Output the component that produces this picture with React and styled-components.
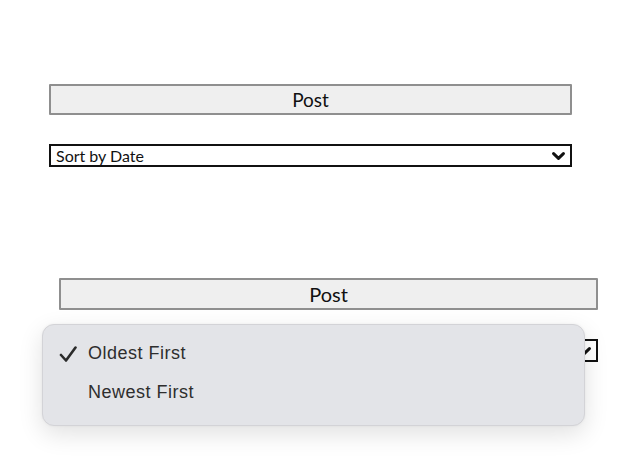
import React from "react";
import styled, { createGlobalStyle } from "styled-components";

const Global = createGlobalStyle`
  html, body { margin: 0; padding: 0; background: #ffffff; }
  body { font-family: "Lato", "Liberation Sans", sans-serif; }
  * { box-sizing: border-box; }
`;

const Page = styled.div`
  width: 637px;
  height: 473px;
  padding-top: 84px;
  display: flex;
  flex-direction: column;
  overflow: hidden;
`;

const Section = styled.div`
  position: relative;
  margin-left: ${(p) => p.$left}px;
  width: ${(p) => p.$width}px;
  margin-top: ${(p) => p.$top || 0}px;
  display: flex;
  flex-direction: column;
  gap: ${(p) => p.$gap}px;
`;

const PostButton = styled.button`
  height: ${(p) => p.$h}px;
  width: 100%;
  background: #efefef;
  border: 2px solid #8f8f8f;
  border-radius: 1px;
  font-family: "Lato", "Liberation Sans", sans-serif;
  font-size: ${(p) => p.$fs}px;
  color: #111;
  padding: 0;
  display: flex;
  align-items: center;
  justify-content: center;
`;

const Select = styled.div`
  height: 23px;
  width: 100%;
  border: 2px solid #111;
  background: #fff;
  display: flex;
  align-items: center;
  justify-content: space-between;
  padding: 0 5px 0 5px;
  font-family: "Lato", "Liberation Sans", sans-serif;
  font-size: 16px;
  color: #111;
`;

const Chevron = () => (
  <svg width="13" height="8" viewBox="0 0 13 8">
    <path d="M1.6 1.6 L6.5 6.3 L11.4 1.6" fill="none" stroke="#111" strokeWidth="3" strokeLinecap="round" strokeLinejoin="round" />
  </svg>
);

const Menu = styled.div`
  position: absolute;
  left: -17px;
  top: 46px;
  width: 543px;
  padding: 9px 0 13px;
  background: #e3e4e8;
  border: 1px solid #d3d3d7;
  border-radius: 12px;
  box-shadow: 0 8px 24px rgba(0, 0, 0, 0.12), 0 0 3px rgba(0, 0, 0, 0.05);
  display: flex;
  flex-direction: column;
`;

const MenuItem = styled.div`
  height: 39px;
  display: flex;
  align-items: center;
  font-family: "Liberation Sans", "Inter", sans-serif;
  font-size: 18px;
  letter-spacing: 0.5px;
  color: #2e2e2e;
`;

const CheckSlot = styled.span`
  width: 45px;
  padding-left: 16px;
  display: flex;
  align-items: center;
`;

const Check = () => (
  <svg width="18" height="16" viewBox="0 0 18 16">
    <path d="M2 9 L7 14.5 L16.5 1.5" fill="none" stroke="#2b2b2b" strokeWidth="2.6" strokeLinecap="round" strokeLinejoin="round" />
  </svg>
);

export default function App() {
  return (
    <>
      <Global />
      <Page>
        <Section $left={49} $width={523} $gap={29}>
          <PostButton $h={31} $fs={19}>Post</PostButton>
          <Select>
            <span>Sort by Date</span>
            <Chevron />
          </Select>
        </Section>
        <Section $left={59} $width={539} $gap={29} $top={111}>
          <PostButton $h={32} $fs={20}>Post</PostButton>
          <Select>
            <span>Sort by Date</span>
            <Chevron />
          </Select>
          <Menu>
            <MenuItem>
              <CheckSlot>
                <Check />
              </CheckSlot>
              Oldest First
            </MenuItem>
            <MenuItem>
              <CheckSlot />
              Newest First
            </MenuItem>
          </Menu>
        </Section>
      </Page>
    </>
  );
}
